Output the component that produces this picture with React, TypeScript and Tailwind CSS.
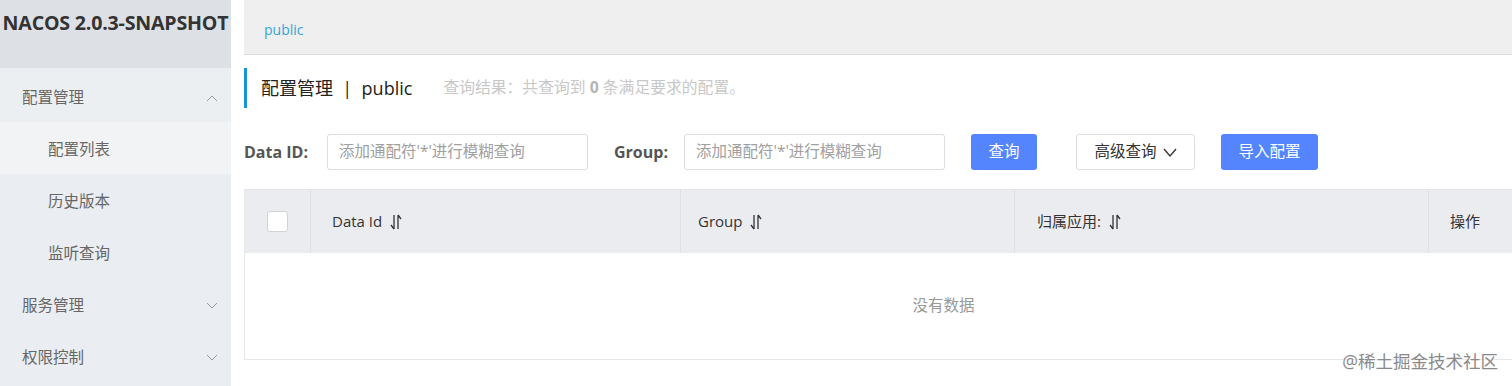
import React from "react";

const font = { fontFamily: '"Open Sans", "Noto Sans CJK SC", sans-serif' };

function Chevron({ up }: { up?: boolean }) {
    return (
        <svg width="12" height="8" viewBox="0 0 12 8" className="text-[#999]">
            <path d={up ? "M1 7 L6 2 L11 7" : "M1 1 L6 6 L11 1"} fill="none" stroke="currentColor" strokeWidth="1" />
        </svg>
    );
}

function SortIcon() {
    return (
        <svg width="12" height="16" viewBox="0 0 12 16" className="ml-2 text-[#333]">
            <path d="M4 1 V15 M4 15 L1 11" fill="none" stroke="currentColor" strokeWidth="1.3" />
            <path d="M8 15 V1 M8 1 L11 5" fill="none" stroke="currentColor" strokeWidth="1.3" />
        </svg>
    );
}

const menu = [
    { name: "配置管理", level: 0, chevron: "up" },
    { name: "配置列表", level: 1, active: true },
    { name: "历史版本", level: 1 },
    { name: "监听查询", level: 1 },
    { name: "服务管理", level: 0, chevron: "down" },
    { name: "权限控制", level: 0, chevron: "down" },
];

function Sidebar() {
    return (
        <div className="flex w-[231px] shrink-0 flex-col bg-[#eaedf1]">
            <div className="flex h-[68px] items-start justify-center overflow-hidden bg-[#dde1e5] pt-[8px]">
                <span className="whitespace-nowrap text-[19.6px] font-bold text-[#333] tracking-[-0.2px]">NACOS 2.0.3-SNAPSHOT</span>
            </div>
            <ul className="flex flex-col pt-[2px]">
                {menu.map((item) => (
                    <li
                        key={item.name}
                        className={
                            "flex h-[52px] items-center justify-between pr-[13px] pt-[3px] text-[15.5px] text-[#666] " +
                            (item.level === 1 ? "pl-[48px] " : "pl-[22px] ") +
                            (item.active ? "bg-[#f2f3f5]" : item.name === "配置管理" ? "bg-[#eceff2]" : "")
                        }
                    >
                        <span>{item.name}</span>
                        {item.chevron && <Chevron up={item.chevron === "up"} />}
                    </li>
                ))}
            </ul>
        </div>
    );
}

function Input() {
    return (
        <div className="flex h-[36px] w-[261px] items-center rounded-[3px] border border-[#dcdee3] bg-white px-[11px] text-[15.5px] text-[#a0a0a0]">
            添加通配符'*'进行模糊查询
        </div>
    );
}

export default function App() {
    return (
        <div className="flex h-[386px] w-[1512px] overflow-hidden bg-white" style={font}>
            <Sidebar />
            <div className="ml-[13px] flex min-w-0 flex-1 flex-col">
                <div className="flex h-[55px] shrink-0 items-center border-b border-[#dcdcdc] bg-[#efefef] pl-[20px] pt-[5px]">
                    <span className="text-[14px] text-[#2fa8d8]">public</span>
                </div>
                <div className="mt-[13px] flex h-[40px] items-center border-l-[3px] border-[#1593d4] pl-[14px]">
                    <span className="text-[18px] text-[#222]">配置管理&nbsp;&nbsp;|&nbsp;&nbsp;public</span>
                    <span className="ml-[31px] text-[15.8px] text-[#c8c8c8]">
                        查询结果：共查询到 <b className="text-[#b5b5b5]">0</b> 条满足要求的配置。
                    </span>
                </div>
                <div className="mt-[26px] flex items-center">
                    <span className="w-[83px] text-[16px] font-bold text-[#555]">Data ID:</span>
                    <Input />
                    <span className="ml-[26px] w-[70px] text-[16px] font-bold text-[#555]">Group:</span>
                    <Input />
                    <button className="ml-[26px] h-[36px] w-[66px] rounded-[3px] bg-[#5584ff] text-[15.5px] text-white">查询</button>
                    <button className="ml-[39px] flex h-[36px] w-[119px] items-center justify-center gap-[6px] rounded-[3px] border border-[#dcdee3] bg-white text-[15.5px] text-[#333]">
                        高级查询
                        <svg width="14" height="9" viewBox="0 0 14 9">
                            <path d="M1 1 L7 8 L13 1" fill="none" stroke="#333" strokeWidth="1.3" />
                        </svg>
                    </button>
                    <button className="ml-[26px] h-[36px] w-[97px] rounded-[3px] bg-[#5584ff] text-[15.5px] text-white">导入配置</button>
                </div>
                <div className="mt-[19px] w-[1398px] shrink-0 border-b border-l border-[#e6e7eb]">
                    <div className="flex h-[64px] items-center border-t border-[#e3e4e8] bg-[#ebecf0] text-[15px] text-[#333]">
                        <div className="flex h-full w-[66px] items-center justify-center border-r border-[#dfe0e4]">
                            <span className="h-[21px] w-[21px] rounded-[3px] border border-[#d0d2d6] bg-white" />
                        </div>
                        <div className="flex h-full w-[370px] items-center border-r border-[#dfe0e4] pl-[21px]">
                            Data Id <SortIcon />
                        </div>
                        <div className="flex h-full w-[334px] items-center border-r border-[#dfe0e4] pl-[17px]">
                            Group <SortIcon />
                        </div>
                        <div className="flex h-full w-[414px] items-center border-r border-[#dfe0e4] pl-[22px]">
                            归属应用: <SortIcon />
                        </div>
                        <div className="flex h-full flex-1 items-center pl-[21px]">操作</div>
                    </div>
                    <div className="flex h-[106px] items-center justify-center text-[15.5px] text-[#999]">
                        没有数据
                    </div>
                </div>
                <div className="-mt-[12px] flex w-[1268px] justify-end pr-[14px]">
                    <span className="relative text-[17.5px] text-[#8a8a8a] [text-shadow:0_0_2px_white]">@稀土掘金技术社区</span>
                </div>
            </div>
        </div>
    );
}
